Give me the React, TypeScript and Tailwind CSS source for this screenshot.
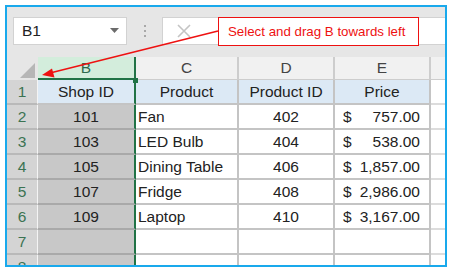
import React from "react";

const font = { fontFamily: '"Liberation Sans", Arial, sans-serif' };

type Row = { n: number; b: string; c: string; d: string; e: string };
const rows: Row[] = [
  { n: 2, b: "101", c: "Fan", d: "402", e: "757.00" },
  { n: 3, b: "103", c: "LED Bulb", d: "404", e: "538.00" },
  { n: 4, b: "105", c: "Dining Table", d: "406", e: "1,857.00" },
  { n: 5, b: "107", c: "Fridge", d: "408", e: "2,986.00" },
  { n: 6, b: "109", c: "Laptop", d: "410", e: "3,167.00" },
  { n: 7, b: "", c: "", d: "", e: "" },
  { n: 8, b: "", c: "", d: "", e: "" },
];

function RowHead({ n }: { n: number }) {
  return (
    <div className="w-[31px] shrink-0 h-full flex items-center justify-center bg-[#d4d4d4] border-r border-r-[#f4f4f4] border-b-2 border-b-[#b9b9b9] text-[#3b7352] text-[15.5px]">
      {n}
    </div>
  );
}

export default function App() {
  return (
    <div className="w-[453px] h-[271px] bg-white pt-[5px] pl-[5px] relative overflow-hidden" style={font}>
      <div className="w-[442px] h-[262px] border-2 border-[#19a9ec] bg-[#e6e6e6] overflow-hidden flex flex-col">
        {/* toolbar */}
        <div className="h-[50px] shrink-0 flex items-start pt-[10px]">
          <div className="ml-[6px] w-[114px] h-[28px] bg-white border border-[#d2d2d2] flex items-center justify-between pl-[8px] pr-[7px]">
            <span className="text-[15.5px] text-[#222]">B1</span>
            <svg width="9" height="6" viewBox="0 0 9 6">
              <polygon points="0,0 9,0 4.5,5" fill="#6b6b6b" />
            </svg>
          </div>
          <div className="w-[35px] h-[28px] flex flex-col items-center justify-center gap-[3px]">
            <div className="w-[2px] h-[2px] bg-[#a8a8a8]" />
            <div className="w-[2px] h-[2px] bg-[#a8a8a8]" />
            <div className="w-[2px] h-[2px] bg-[#a8a8a8]" />
          </div>
          <div className="flex-1 h-[28px] bg-white border border-[#d2d2d2] border-r-0 flex items-start">
            <div className="w-[55px] h-full flex items-center pl-[14px]">
              <svg width="14" height="14" viewBox="0 0 14 14">
                <path d="M1 1 L13 13 M13 1 L1 13" stroke="#c4c4c4" strokeWidth="1.6" />
              </svg>
            </div>
            <div className="w-[201px] h-[29px] -mt-px bg-white border border-[#ee1111] flex items-center pl-[9px] text-[13.3px] text-[#ee1111]">
              Select and drag B towards left
            </div>
          </div>
        </div>
        {/* column headers */}
        <div className="h-[23px] shrink-0 flex bg-[#f1f1f1] text-[15.5px] text-[#444]">
          <div className="w-[31px] shrink-0 h-full flex items-end justify-end pr-[3px] pb-[2px] bg-[#e6e6e6]">
            <svg width="15" height="15" viewBox="0 0 15 15">
              <polygon points="15,0 15,15 0,15" fill="#b6b6b6" />
            </svg>
          </div>
          <div className="w-[98px] shrink-0 h-full bg-[#d3eddc] border-b-2 border-b-[#217346] border-r-2 border-r-[#217346] flex items-center justify-center text-[#2d6a4c] relative">
            B
            <div className="absolute right-[-4px] bottom-[-5px] w-[5px] h-[5px] bg-[#217346]" />
          </div>
          <div className="w-[103px] shrink-0 h-full border-r-2 border-r-[#cdcdcd] border-b border-b-[#cdcdcd] flex items-center justify-center">C</div>
          <div className="w-[96px] shrink-0 h-full border-r-2 border-r-[#cdcdcd] border-b border-b-[#cdcdcd] flex items-center justify-center">D</div>
          <div className="w-[96px] shrink-0 h-full border-r-2 border-r-[#cdcdcd] border-b border-b-[#cdcdcd] flex items-center justify-center">E</div>
          <div className="flex-1 h-full border-b border-b-[#cdcdcd]" />
        </div>
        {/* header row 1 */}
        <div className="h-[25px] shrink-0 flex text-[15.5px] text-[#222]">
          <RowHead n={1} />
          <div className="w-[98px] shrink-0 h-full bg-[#dce9f5] border-r-2 border-r-[#217346] border-b-2 border-b-[#c4c4c4] flex items-center justify-center">Shop ID</div>
          <div className="w-[103px] shrink-0 h-full bg-[#dce9f5] border-r-2 border-r-[#c4c4c4] border-b-2 border-b-[#c4c4c4] flex items-center justify-center">Product</div>
          <div className="w-[96px] shrink-0 h-full bg-[#dce9f5] border-r-2 border-r-[#c4c4c4] border-b-2 border-b-[#c4c4c4] flex items-center justify-center">Product ID</div>
          <div className="w-[96px] shrink-0 h-full bg-[#dce9f5] border-r-2 border-r-[#c4c4c4] border-b-2 border-b-[#c4c4c4] flex items-center justify-center">Price</div>
          <div className="flex-1 h-full bg-white border-b-2 border-b-[#dcdcdc]" />
        </div>
        {rows.map((r) => (
          <div key={r.n} className="h-[25px] shrink-0 flex text-[15.5px] text-[#222]">
            <RowHead n={r.n} />
            <div className="w-[98px] shrink-0 h-full bg-[#c8c8c8] border-r-2 border-r-[#217346] border-b-2 border-b-[#a9a9a9] flex items-center justify-center">{r.b}</div>
            <div className="w-[103px] shrink-0 h-full bg-white border-r-2 border-r-[#c4c4c4] border-b-2 border-b-[#c4c4c4] flex items-center pl-[2px] whitespace-nowrap">{r.c}</div>
            <div className="w-[96px] shrink-0 h-full bg-white border-r-2 border-r-[#c4c4c4] border-b-2 border-b-[#c4c4c4] flex items-center justify-center">{r.d}</div>
            <div className="w-[96px] shrink-0 h-full bg-white border-r-2 border-r-[#c4c4c4] border-b-2 border-b-[#c4c4c4] flex items-center justify-between pl-[8px] pr-[9px]">
              {r.e ? (
                <>
                  <span>$</span>
                  <span>{r.e}</span>
                </>
              ) : null}
            </div>
            <div className="flex-1 h-full bg-white border-b-2 border-b-[#dcdcdc]" />
          </div>
        ))}
      </div>
      {/* arrow overlay */}
      <svg className="absolute left-0 top-0 pointer-events-none" width="453" height="271" viewBox="0 0 453 271">
        <line x1="218" y1="31" x2="50" y2="73" stroke="#ee1111" strokeWidth="1.3" />
        <polygon points="42,75 52,68.5 54.5,77.5" fill="#ee1111" />
      </svg>
    </div>
  );
}
